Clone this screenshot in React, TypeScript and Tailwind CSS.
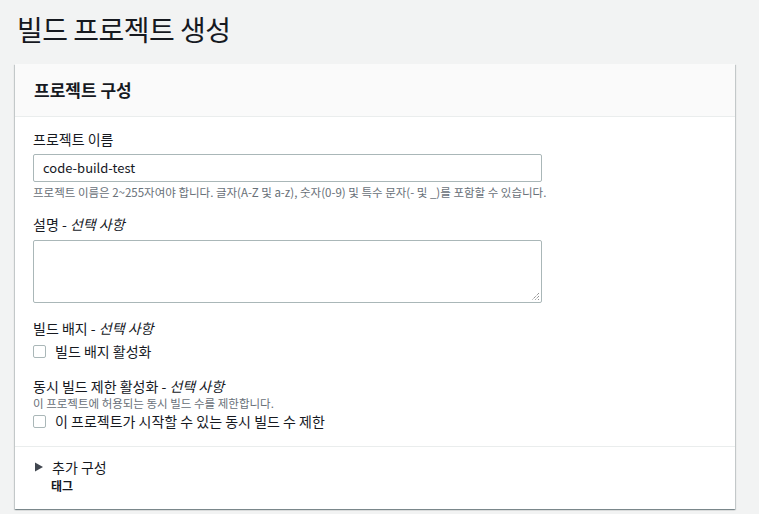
import React from "react";

const font = { fontFamily: '"Noto Sans CJK KR", "Noto Sans", sans-serif' };

function Checkbox() {
  return <span className="inline-block w-[13px] h-[13px] border border-[#aab7b8] rounded-[2px] bg-white shrink-0" />;
}

export default function App() {
  return (
    <div className="w-[759px] h-[514px] bg-[#f2f3f3] overflow-hidden text-[#16191f]" style={font}>
      <div className="pl-[17px] pt-[10px] h-[64px]">
        <h1 className="text-[28px] leading-[38px] font-normal tracking-[-0.5px]">빌드 프로젝트 생성</h1>
      </div>
      <div className="ml-[15px] w-[720px] bg-white shadow-[0_1px_1px_0_rgba(0,28,36,0.3),1px_1px_1px_0_rgba(0,28,36,0.15),-1px_1px_1px_0_rgba(0,28,36,0.15)]">
        <div className="h-[53px] bg-[#fafafa] border-b border-[#eaeded] pl-[19px] flex items-center">
          <h2 className="text-[17px] font-bold leading-[22px]">프로젝트 구성</h2>
        </div>
        <div className="pl-[18px] pt-[12px] pb-[15px] border-b border-[#eaeded]">
          <div className="text-[14px] leading-[20px]">프로젝트 이름</div>
          <div className="mt-[5px] w-[509px] h-[28px] border border-[#aab7b8] rounded-[2px] flex items-center pl-[9px] text-[13px]">code-build-test</div>
          <div className="mt-[2px] text-[11.5px] leading-[16px] text-[#687078]">프로젝트 이름은 2~255자여야 합니다. 글자(A-Z 및 a-z), 숫자(0-9) 및 특수 문자(- 및 _)를 포함할 수 있습니다.</div>
          <div className="mt-[14px] text-[14px] leading-[20px]">설명 - <i>선택 사항</i></div>
          <div className="mt-[6px] w-[509px] h-[63px] border border-[#aab7b8] rounded-[2px] relative">
            <svg className="absolute right-[1px] bottom-[1px]" width="9" height="9" viewBox="0 0 9 9">
              <path d="M8 1 L1 8 M8 4 L4 8 M8 7 L7 8" stroke="#666" strokeWidth="1" strokeDasharray="1 1" />
            </svg>
          </div>
          <div className="mt-[15px] text-[14px] leading-[20px]">빌드 배지 - <i>선택 사항</i></div>
          <div className="mt-[3px] flex items-center gap-[9px] text-[14px] leading-[20px]">
            <Checkbox />
            <span>빌드 배지 활성화</span>
          </div>
          <div className="mt-[15px] text-[14px] leading-[20px]">동시 빌드 제한 활성화 - <i>선택 사항</i></div>
          <div className="text-[11.5px] leading-[14px] text-[#687078]">이 프로젝트에 허용되는 동시 빌드 수를 제한합니다.</div>
          <div className="mt-[1px] flex items-center gap-[9px] text-[14px] leading-[20px]">
            <Checkbox />
            <span>이 프로젝트가 시작할 수 있는 동시 빌드 수 제한</span>
          </div>
        </div>
        <div className="pl-[18px] pt-[10px] pb-[15px]">
          <div className="flex items-center gap-[8px] text-[14px] leading-[20px]">
            <svg width="10" height="10" viewBox="0 0 10 10" className="ml-[1px]"><path d="M1 0.5 L9 5 L1 9.5 Z" fill="#414750" /></svg>
            <span>추가 구성</span>
          </div>
          <div className="pl-[18px] mt-[1px] text-[12px] leading-[16px] font-bold text-[#16191f]">태그</div>
        </div>
      </div>
    </div>
  );
}
